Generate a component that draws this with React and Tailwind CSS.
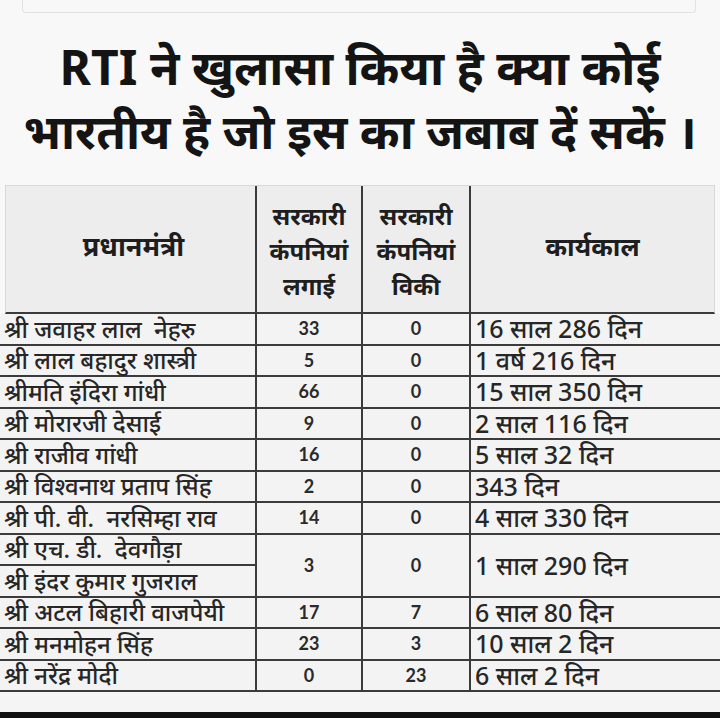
import React from 'react';

const rows = [
  { names: ['श्री जवाहर लाल  नेहरु'], made: '33', sold: '0', term: '16 साल 286 दिन' },
  { names: ['श्री लाल बहादुर शास्त्री'], made: '5', sold: '0', term: '1 वर्ष 216 दिन' },
  { names: ['श्रीमति इंदिरा गांधी'], made: '66', sold: '0', term: '15 साल 350 दिन' },
  { names: ['श्री मोरारजी देसाई'], made: '9', sold: '0', term: '2 साल 116 दिन' },
  { names: ['श्री राजीव गांधी'], made: '16', sold: '0', term: '5 साल 32 दिन' },
  { names: ['श्री विश्वनाथ प्रताप सिंह'], made: '2', sold: '0', term: '343 दिन' },
  { names: ['श्री पी. वी.  नरसिम्हा राव'], made: '14', sold: '0', term: '4 साल 330 दिन' },
  { names: ['श्री एच. डी.  देवगौड़ा', 'श्री इंदर कुमार गुजराल'], made: '3', sold: '0', term: '1 साल 290 दिन' },
  { names: ['श्री अटल बिहारी वाजपेयी'], made: '17', sold: '7', term: '6 साल 80 दिन' },
  { names: ['श्री मनमोहन सिंह'], made: '23', sold: '3', term: '10 साल 2 दिन' },
  { names: ['श्री नरेंद्र मोदी'], made: '0', sold: '23', term: '6 साल 2 दिन' },
];

const hindi = "font-['Noto_Sans','Noto_Sans_Devanagari',sans-serif]";
const num = "font-['Lato','Liberation_Sans',sans-serif]";
const line = 'border-[#3b3b3b]';

const Row = ({ r }) => {
  const span = r.names.length;
  const h = span === 2 ? 'h-[63px]' : 'h-[31.5px]';
  return (
    <div className={`flex ${h} border-b-2 ${line}`}>
      <div className={`w-[257px] flex flex-col border-r-2 ${line}`}>
        {r.names.map((n, i) => (
          <div
            key={i}
            className={`flex-1 flex items-center pl-[4px] text-[24px] leading-[24px] font-medium text-[#262626] whitespace-pre ${i < span - 1 ? `border-b-2 ${line}` : ''}`}
          >
            {n}
          </div>
        ))}
      </div>
      <div className={`w-[106px] flex items-center justify-center border-r-2 ${line} text-[18px] font-bold text-[#2a2a2a] ${num}`}>
        {r.made}
      </div>
      <div className={`w-[108px] flex items-center justify-center border-r-2 ${line} text-[18px] font-bold text-[#2a2a2a] ${num}`}>
        {r.sold}
      </div>
      <div className="flex-1 flex items-center pl-[4px] text-[25px] leading-[25px] font-medium text-[#262626]">
        {r.term}
      </div>
    </div>
  );
};

const App = () => {
  return (
    <div className={`w-[720px] h-[718px] bg-[#f8f8f8] flex flex-col overflow-hidden ${hindi}`}>
      <div className="h-[13px] ml-[22px] mr-[24px] border-x border-b border-[#e2e2e2] rounded-b-sm"></div>
      <div className="h-[172px] flex flex-col items-center pt-[22px] text-[#141414] font-bold text-[48px] leading-[64px]">
        <div>RTI ने खुलासा किया है क्या कोई</div>
        <div>भारतीय है जो इस का जबाब दें सकें ।</div>
      </div>
      <div className="flex flex-col">
        <div className="flex h-[129px] mx-[5px] bg-[#ededee] border-t border-x border-[#d8d8d8] border-b-2 border-b-[#3b3b3b]">
          <div className={`w-[251px] flex items-center justify-center pl-[6px] pb-[6px] border-r-2 ${line} text-[27px] font-bold text-[#1e1e1e]`}>
            प्रधानमंत्री
          </div>
          <div className={`w-[106px] flex flex-col items-center justify-center pt-[2px] border-r-2 ${line} text-[24px] font-bold leading-[35px] text-[#1e1e1e]`}>
            <span>सरकारी</span>
            <span>कंपनियां</span>
            <span>लगाई</span>
          </div>
          <div className={`w-[108px] flex flex-col items-center justify-center pt-[2px] border-r-2 ${line} text-[24px] font-bold leading-[35px] text-[#1e1e1e]`}>
            <span>सरकारी</span>
            <span>कंपनियां</span>
            <span>विकी</span>
          </div>
          <div className="flex-1 flex items-center justify-center pb-[6px] text-[26px] font-bold text-[#1e1e1e]">
            कार्यकाल
          </div>
        </div>
        <div className="bg-[#f3f3f3]">
          {rows.map((r, i) => (
            <Row key={i} r={r} />
          ))}
        </div>
      </div>
      <div className="flex-1 bg-[#f4f4f4]"></div>
      <div className="h-[6px] bg-[#101010]"></div>
    </div>
  );
};

export default App;
